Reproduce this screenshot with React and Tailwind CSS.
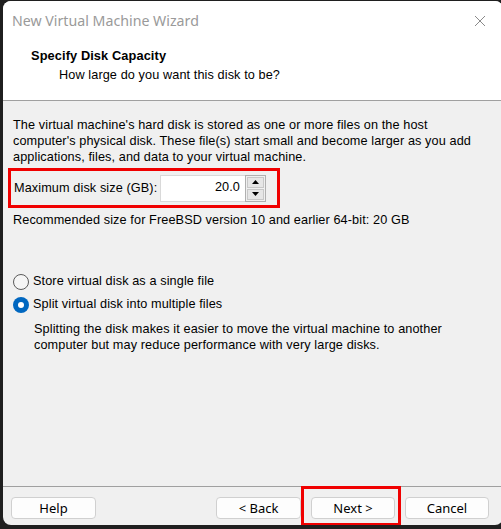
export default function App() {
  const body = { fontFamily: '"Liberation Sans", Arial, sans-serif', letterSpacing: '0.1px' };
  const ui = { fontFamily: '"Noto Sans", "Open Sans", sans-serif', letterSpacing: '0px' };
  return (
    <div className="w-[501px] h-[529px] bg-[#1f1f1f] overflow-hidden pt-[1px] pl-[3px]">
      <div className="w-[500px] h-[524px] rounded-lg bg-[#f0f0f0] flex flex-col overflow-hidden text-black" style={body}>
        {/* title bar */}
        <div className="h-[34px] bg-white flex items-start justify-between pl-[9px] pr-[14px] pt-[13px] shrink-0">
          <span className="text-[14.2px] text-[#9a9a9a] leading-none" style={ui}>New Virtual Machine Wizard</span>
          <svg width="12" height="12" viewBox="0 0 12 12" className="mr-[3px] mt-[1px]">
            <path d="M1 1 L11 11 M11 1 L1 11" stroke="#8a8a8a" strokeWidth="1" />
          </svg>
        </div>
        {/* header */}
        <div className="h-[66px] bg-white border-b border-[#a0a0a0] shrink-0 pl-[28px] pt-[12px]">
          <div className="text-[12.8px] font-bold leading-[18px]">Specify Disk Capacity</div>
          <div className="text-[12.7px] leading-[18px] pl-[28px] pt-[1px]">How large do you want this disk to be?</div>
        </div>
        {/* content */}
        <div className="flex-1 flex flex-col px-[10px] pt-[16px] text-[12.7px]">
          <p className="leading-[16px] pr-[8px]">
            The virtual machine's hard disk is stored as one or more files on the host computer's physical disk. These file(s) start small and become larger as you add applications, files, and data to your virtual machine.
          </p>
          <div className="mt-[3px] -ml-[5px] w-[272px] h-[40px] border-[3px] border-[#f00000] flex items-center pl-[3px]">
            <span className="leading-none w-[146px] shrink-0 whitespace-nowrap">Maximum disk size (GB):</span>
            <div className="flex items-center shrink-0">
              <div className="w-[86px] h-[27px] bg-white border border-[#d9d9d9] flex items-center justify-end pr-[5px]">20.0</div>
              <div className="flex flex-col w-[21px] h-[27px] border border-[#b0b0b0] bg-[#f0f0f0] -ml-[1px] p-[1px] gap-[1px]">
                <div className="flex-1 bg-[#e6e6e6] border border-[#c8c8c8] flex items-center justify-center">
                  <svg width="7" height="4" viewBox="0 0 7 4"><path d="M3.5 0 L7 4 L0 4 Z" fill="#000" /></svg>
                </div>
                <div className="flex-1 bg-[#e6e6e6] border border-[#c8c8c8] flex items-center justify-center">
                  <svg width="7" height="4" viewBox="0 0 7 4"><path d="M0 0 L7 0 L3.5 4 Z" fill="#000" /></svg>
                </div>
              </div>
            </div>
          </div>
          <div className="mt-[4px] leading-[16px]">Recommended size for FreeBSD version 10 and earlier 64-bit: 20 GB</div>

          <div className="mt-[46px] flex flex-col gap-[7px]">
            <label className="flex items-center gap-[4px] h-[16px]">
              <span className="w-[16px] h-[16px] rounded-full border border-[#5a5a5a] bg-[#f5f5f5] box-border"></span>
              <span>Store virtual disk as a single file</span>
            </label>
            <label className="flex items-center gap-[4px] h-[16px]">
              <span className="w-[16px] h-[16px] rounded-full bg-[#0067c0] flex items-center justify-center">
                <span className="w-[6px] h-[6px] rounded-full bg-white"></span>
              </span>
              <span>Split virtual disk into multiple files</span>
            </label>
          </div>
          <p className="mt-[8px] pl-[21px] leading-[16px] pr-[8px]">
            Splitting the disk makes it easier to move the virtual machine to another computer but may reduce performance with very large disks.
          </p>
        </div>
        {/* footer */}
        <div className="h-[39px] border-t border-[#a0a0a0] shrink-0 flex items-start pt-[10px] pl-[8px] pr-[14px] text-[13px]" style={ui}>
          <button className="w-[85px] h-[22px] rounded-[4px] border border-[#d0d0d0] bg-[#fdfdfd] leading-none">Help</button>
          <div className="flex-1"></div>
          <button className="w-[85px] h-[22px] rounded-[4px] border border-[#d0d0d0] bg-[#fdfdfd] leading-none">&lt; Back</button>
          <div className="relative ml-[10px] w-[84px] h-[22px]">
            <div className="absolute -left-[10px] -top-[11px] w-[100px] h-[40px] border-[3px] border-[#f00000]"></div>
            <button className="relative w-[84px] h-[22px] rounded-[4px] border border-[#d0d0d0] bg-[#fdfdfd] leading-none">Next &gt;</button>
          </div>
          <button className="ml-[10px] w-[84px] h-[22px] rounded-[4px] border border-[#d0d0d0] bg-[#fdfdfd] leading-none">Cancel</button>
        </div>
      </div>
    </div>
  );
}
